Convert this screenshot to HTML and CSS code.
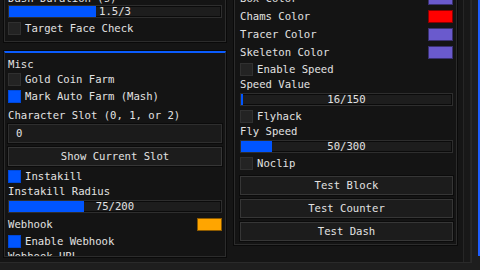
FILE: index.html
```html
<!DOCTYPE html>
<html>
<head>
	<title>Menu</title>
	<link rel="stylesheet" href="styles.css">
</head>
<body>
	<div class="screen">
		<div class="window">
			<div class="col-left">
				<div class="group group-top">
					<div class="label tight">Dash Duration (s)</div>
					<div class="slider"><div class="fill" style="width:87px"></div><span>1.5/3</span></div>
					<div class="check last"><span class="box"></span>Target Face Check</div>
				</div>
				<div class="group group-misc">
					<div class="label">Misc</div>
					<div class="check"><span class="box"></span>Gold Coin Farm</div>
					<div class="check"><span class="box on"></span>Mark Auto Farm (Mash)</div>
					<div class="label spaced">Character Slot (0, 1, or 2)</div>
					<div class="input">0</div>
					<div class="button">Show Current Slot</div>
					<div class="check"><span class="box on"></span>Instakill</div>
					<div class="label">Instakill Radius</div>
					<div class="slider"><div class="fill" style="width:75px"></div><span>75/200</span></div>
					<div class="color-row"><span>Webhook</span><span class="swatch orange"></span></div>
					<div class="check"><span class="box on"></span>Enable Webhook</div>
					<div class="label">Webhook URL</div>
				</div>
			</div>
			<div class="col-right">
				<div class="rpanel">
					<div class="color-row"><span>Box Color</span><span class="swatch purple"></span></div>
					<div class="color-row"><span>Chams Color</span><span class="swatch red"></span></div>
					<div class="color-row"><span>Tracer Color</span><span class="swatch purple"></span></div>
					<div class="color-row"><span>Skeleton Color</span><span class="swatch purple"></span></div>
					<div class="check"><span class="box"></span>Enable Speed</div>
					<div class="label">Speed Value</div>
					<div class="slider"><div class="fill" style="width:2px"></div><span>16/150</span></div>
					<div class="check"><span class="box"></span>Flyhack</div>
					<div class="label">Fly Speed</div>
					<div class="slider"><div class="fill" style="width:31px"></div><span>50/300</span></div>
					<div class="check"><span class="box"></span>Noclip</div>
					<div class="button first">Test Block</div>
					<div class="button">Test Counter</div>
					<div class="button last">Test Dash</div>
				</div>
				<div class="track"></div>
			</div>
		</div>
		<div class="edge"></div>
	</div>
</body>
</html>
```

FILE: styles.css
```css
*{
	margin: 0;
	padding: 0;
	box-sizing: border-box;
}
body{
	background: #1e1e1e;
	font-family: "DejaVu Sans Mono", monospace;
	font-size: 10.6px;
	color: #e2e2e2;
	overflow: hidden;
}
.screen{
	display: flex;
	width: 480px;
	height: 270px;
}
.window{
	display: flex;
	width: 472px;
	height: 263px;
	background: #151515;
	border-right: 1px solid #2a2a2a;
	border-bottom: 1px solid #2a2a2a;
	overflow: hidden;
}
.edge{
	width: 2px;
	height: 256px;
	margin-left: 6px;
	background: #1f5fff;
}

/* left column */
.col-left{
	width: 230px;
	padding-left: 4px;
	margin-top: -13px;
}
.group{
	display: flex;
	flex-direction: column;
	width: 222px;
	background: #141414;
	border: 1px solid #2c2c2c;
	box-shadow: 0 0 0 1px #0a0a0a;
	padding: 6px 3px 6px 3px;
}
.group-misc{
	margin-top: 9px;
	height: 206px;
	overflow: hidden;
	border-top: 2px solid #0a5cff;
	padding-top: 7px;
}

/* right column */
.col-right{
	display: flex;
	flex: 1;
	margin-top: -20px;
}
.rpanel{
	display: flex;
	flex-direction: column;
	width: 223px;
	margin-left: 4px;
	align-self: flex-start;
	background: #141414;
	border: 1px solid #2c2c2c;
	box-shadow: 0 0 0 1px #0a0a0a;
	padding: 10px 3px 3px 5px;
}
.track{
	width: 8px;
	margin-left: 6px;
	border-left: 1px solid #262626;
	border-right: 1px solid #262626;
	background: #181818;
}

/* widgets */
.label{
	flex: none;
	height: 9px;
	line-height: 9px;
	margin-bottom: 4px;
	white-space: nowrap;
}
.label.tight{
	margin-bottom: 2px;
}
.spaced{
	margin-top: 4px;
}
.check{
	flex: none;
	display: flex;
	align-items: center;
	height: 13px;
	line-height: 13px;
	margin-bottom: 4px;
	white-space: nowrap;
}
.box{
	width: 13px;
	height: 13px;
	margin-right: 4px;
	background: #232323;
	border: 1px solid #303030;
}
.box.on{
	background: #0055ff;
	border-color: #0048d8;
}
.slider{
	flex: none;
	display: grid;
	height: 13px;
	margin-bottom: 4px;
	background: #1d1d1d;
	border: 1px solid #2e2e2e;
	box-shadow: 0 0 0 1px #0b0b0b inset;
}
.slider > *{
	grid-area: 1 / 1;
}
.slider .fill{
	justify-self: start;
	background: #0055ff;
}
.slider span{
	text-align: center;
	line-height: 11px;
}
.input{
	flex: none;
	height: 19px;
	line-height: 17px;
	padding-left: 7px;
	margin-bottom: 4px;
	background: #1b1b1b;
	border: 1px solid #2e2e2e;
	box-shadow: 0 0 0 1px #0b0b0b;
}
.button{
	flex: none;
	height: 19px;
	line-height: 17px;
	text-align: center;
	margin-bottom: 4px;
	background: #1c1c1c;
	border: 1px solid #363636;
	box-shadow: 0 0 0 1px #0b0b0b;
}
.button.first{
	margin-top: 2px;
}
.last{
	margin-bottom: 0;
}
.color-row{
	flex: none;
	display: flex;
	justify-content: space-between;
	align-items: center;
	height: 14px;
	line-height: 14px;
	margin-bottom: 4px;
}
.swatch{
	width: 25px;
	height: 13px;
	border: 1px solid rgba(0,0,0,0.45);
}
.purple{
	background: #6a5acd;
}
.red{
	background: #ff0000;
}
.orange{
	background: #ffa500;
}
```
